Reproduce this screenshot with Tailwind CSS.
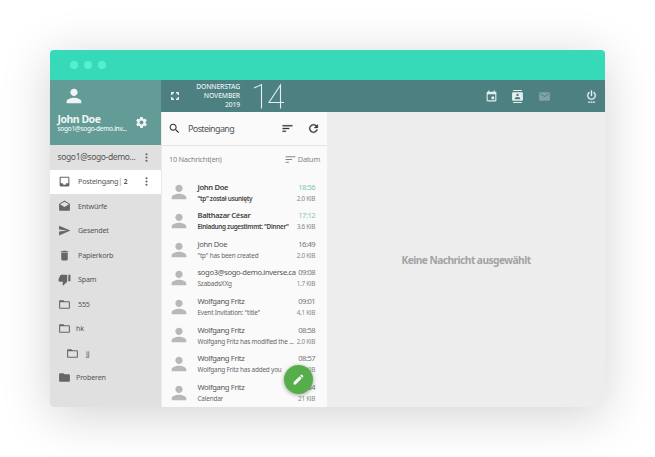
<!DOCTYPE html>
<html lang="de">
<head>
<meta charset="utf-8">
<title>SOGo Webmail</title>
<script src="https://cdn.jsdelivr.net/npm/@tailwindcss/browser@4"></script>
</head>
<body class="h-[457px] w-[655px] overflow-hidden bg-white p-[50px] font-['Noto_Sans','Open_Sans',sans-serif] text-[#555]">
<svg class="hidden">
  <symbol id="person" viewBox="0 0 24 24"><path d="M12 12c2.21 0 4-1.79 4-4s-1.79-4-4-4-4 1.79-4 4 1.79 4 4 4zm0 2c-2.67 0-8 1.34-8 4v2h16v-2c0-2.66-5.33-4-8-4z"/></symbol>
  <symbol id="dots" viewBox="0 0 24 24"><path d="M12 8a2 2 0 1 0 0-4 2 2 0 0 0 0 4zm0 2a2 2 0 1 0 0 4 2 2 0 0 0 0-4zm0 6a2 2 0 1 0 0 4 2 2 0 0 0 0-4z"/></symbol>
  <symbol id="gear" viewBox="0 0 24 24"><path d="M19.43 12.98c.04-.32.07-.64.07-.98s-.03-.66-.07-.98l2.11-1.65c.19-.15.24-.42.12-.64l-2-3.46c-.12-.22-.39-.3-.61-.22l-2.49 1c-.52-.4-1.08-.73-1.69-.98l-.38-2.65C14.46 2.18 14.25 2 14 2h-4c-.25 0-.46.18-.49.42l-.38 2.65c-.61.25-1.17.59-1.69.98l-2.49-1c-.23-.09-.49 0-.61.22l-2 3.46c-.13.22-.07.49.12.64l2.11 1.65c-.04.32-.07.65-.07.98s.03.66.07.98l-2.11 1.65c-.19.15-.24.42-.12.64l2 3.46c.12.22.39.3.61.22l2.49-1c.52.4 1.08.73 1.69.98l.38 2.65c.03.24.24.42.49.42h4c.25 0 .46-.18.49-.42l.38-2.65c.61-.25 1.17-.59 1.69-.98l2.49 1c.23.09.49 0 .61-.22l2-3.46c.12-.22.07-.49-.12-.64l-2.11-1.65zM12 15.500c-1.930 0-3.500-1.570-3.500-3.500s1.570-3.500 3.500-3.500 3.500 1.570 3.500 3.500-1.570 3.500-3.500 3.500z"/></symbol>
  <symbol id="inbox" viewBox="0 0 24 24"><path d="M19 3H5c-1.100 0-2 .9-2 2v14c0 1.100.9 2 2 2h14c1.100 0 2-.9 2-2V5c0-1.100-.9-2-2-2zm0 12h-4c0 1.660-1.350 3-3 3s-3-1.340-3-3H5V5h14v10z"/></symbol>
  <symbol id="draft" viewBox="0 0 24 24"><path d="M21.990 8c0-.72-.37-1.350-.94-1.700L12 1 2.950 6.300C2.380 6.650 2 7.280 2 8v10c0 1.100.9 2 2 2h16c1.100 0 2-.9 2-2l-.01-10zM12 13L3.740 7.840 12 3l8.260 4.840L12 13z"/></symbol>
  <symbol id="send" viewBox="0 0 24 24"><path d="M2.010 21L23 12 2.010 3 2 10l15 2-15 2z"/></symbol>
  <symbol id="trash" viewBox="0 0 24 24"><path d="M6 19c0 1.100.9 2 2 2h8c1.100 0 2-.9 2-2V7H6v12zM19 4h-3.500l-1-1h-5l-1 1H5v2h14V4z"/></symbol>
  <symbol id="spam" viewBox="0 0 24 24"><path d="M15 3H6c-.83 0-1.540.5-1.840 1.220l-3.020 7.050c-.09.23-.14.47-.14.73v2c0 1.100.9 2 2 2h6.310l-.95 4.570-.03.32c0 .41.17.79.44 1.060L9.830 23l6.590-6.590c.36-.36.58-.86.58-1.410V5c0-1.100-.9-2-2-2zm4 0v12h4V3h-4z"/></symbol>
  <symbol id="folder-open" viewBox="0 0 24 24"><path d="M20 6h-8l-2-2H4c-1.100 0-2 .9-2 2v12c0 1.100.9 2 2 2h16c1.100 0 2-.9 2-2V8c0-1.100-.9-2-2-2zm0 12H4V8h16v10z"/></symbol>
  <symbol id="folder" viewBox="0 0 24 24"><path d="M10 4H4c-1.100 0-2 .9-2 2v12c0 1.100.9 2 2 2h16c1.100 0 2-.9 2-2V8c0-1.100-.9-2-2-2h-8l-2-2z"/></symbol>
  <symbol id="full" viewBox="0 0 24 24"><path d="M7 14H4v6h6v-3H7v-3zm-3-4h3V7h3V4H4v6zm13 7h-3v3h6v-6h-3v3zM14 4v3h3v3h3V4h-6z"/></symbol>
  <symbol id="search" viewBox="0 0 24 24"><path d="M15.500 14h-.79l-.28-.27C15.410 12.590 16 11.110 16 9.500 16 5.910 13.090 3 9.500 3S3 5.910 3 9.500 5.910 16 9.500 16c1.610 0 3.090-.59 4.230-1.570l.27.28v.79l5 4.990L20.490 19l-4.990-5zm-6 0C7.010 14 5 11.990 5 9.500S7.010 5 9.500 5 14 7.010 14 9.500 11.990 14 9.500 14z"/></symbol>
  <symbol id="sort" viewBox="0 0 24 24"><path d="M3 18h6v-2H3v2zM3 6v2h18V6H3zm0 7h12v-2H3v2z"/></symbol>
  <symbol id="refresh" viewBox="0 0 24 24"><path d="M17.650 6.350C16.200 4.900 14.210 4 12 4c-4.420 0-7.990 3.580-7.990 8s3.570 8 7.990 8c3.730 0 6.840-2.550 7.730-6h-2.080c-.82 2.330-3.040 4-5.650 4-3.310 0-6-2.690-6-6s2.690-6 6-6c1.660 0 3.140.69 4.220 1.780L13 11h7V4l-2.350 2.350z"/></symbol>
  <symbol id="event" viewBox="0 0 24 24"><path d="M17 12h-5v5h5v-5zM16 1v2H8V1H6v2H5c-1.110 0-1.990.9-1.990 2L3 19c0 1.100.89 2 2 2h14c1.100 0 2-.9 2-2V5c0-1.100-.9-2-2-2h-1V1h-2zm3 18H5V8h14v11z"/></symbol>
  <symbol id="contacts" viewBox="0 0 24 24"><path d="M20 0H4v2h16V0zM4 24h16v-2H4v2zM20 4H4c-1.100 0-2 .9-2 2v12c0 1.100.9 2 2 2h16c1.100 0 2-.9 2-2V6c0-1.100-.9-2-2-2zm-8 2.750c1.240 0 2.250 1.010 2.250 2.250s-1.010 2.250-2.250 2.250S9.750 10.240 9.750 9 10.760 6.750 12 6.750zM17 17H7v-1.500c0-1.670 3.330-2.500 5-2.500s5 .83 5 2.500V17z"/></symbol>
  <symbol id="mail" viewBox="0 0 24 24"><path d="M20 4H4c-1.100 0-2 .9-2 2v12c0 1.100.9 2 2 2h16c1.100 0 2-.9 2-2V6c0-1.100-.9-2-2-2zm0 4l-8 5-8-5V6l8 5 8-5v2z"/></symbol>
  <symbol id="power" viewBox="0 0 24 24"><path d="M13 1h-2v10h2V1zm3.560 2.440l-1.450 1.450A5.969 5.969 0 0 1 18 10c0 3.310-2.690 6-6 6s-6-2.690-6-6c0-2.170 1.160-4.060 2.880-5.120L7.440 3.440A7.961 7.961 0 0 0 4 10c0 4.420 3.580 8 8 8s8-3.580 8-8c0-2.720-1.360-5.120-3.440-6.560zM6 21.500h3v2H6zm4.500 0h3v2h-3zm4.500 0h3v2h-3z"/></symbol>
  <symbol id="pencil" viewBox="0 0 24 24"><path d="M3 17.250V21h3.750L17.810 9.940l-3.750-3.750L3 17.250zM20.710 7.040c.39-.39.39-1.020 0-1.410l-2.340-2.340c-.39-.39-1.020-.39-1.410 0l-1.830 1.830 3.750 3.750 1.830-1.830z"/></symbol>
</svg>

<div class="flex h-[357px] w-[555px] flex-col overflow-hidden rounded-[4px] shadow-[0_8px_50px_rgba(0,0,0,0.18)]">
  <div class="flex h-[30px] shrink-0 items-center gap-[6px] bg-[#36dab9] pl-5">
    <i class="size-2 rounded-full bg-[#55f0d0]"></i><i class="size-2 rounded-full bg-[#55f0d0]"></i><i class="size-2 rounded-full bg-[#55f0d0]"></i>
  </div>
  <div class="flex min-h-0 flex-1">
    <aside class="flex w-[111px] shrink-0 flex-col bg-[#e0e0e0]">
      <div class="flex h-[65px] shrink-0 flex-col bg-[#639b96] text-[#eef5f4]">
        <svg class="mt-[5px] ml-[13px] size-[22px] shrink-0 fill-current"><use href="#person"/></svg>
        <div class="mt-[4px] flex items-center justify-between pr-[13px] pl-[7.500px]">
          <div class="whitespace-nowrap">
            <div class="h-[13px] text-[10.500px] leading-[17px] font-bold tracking-[-0.500px]">John Doe</div>
            <div class="h-[9px] text-[6.600px] leading-[9px] font-medium tracking-[-0.360px]">sogo1@sogo-demo.inv...</div>
          </div>
          <svg class="size-[13px] fill-current"><use href="#gear"/></svg>
        </div>
      </div>
      <div class="flex h-[24.500px] shrink-0 items-center justify-between pr-[8px] pl-[7.500px] text-[8.500px] whitespace-nowrap">
        <span class="tracking-[-0.360px]">sogo1@sogo-demo...</span><svg class="size-[13px] shrink-0 fill-[#666]"><use href="#dots"/></svg>
      </div>
      <nav id="folders" class="text-[7.200px] tracking-[-0.190px] whitespace-nowrap"></nav>
    </aside>
    <div class="flex min-w-0 flex-1 flex-col">
      <header class="flex h-[32px] shrink-0 items-center bg-[#4d8080] text-[#e6efef]">
        <svg class="ml-[8px] size-[12px] fill-current"><use href="#full"/></svg>
        <div class="w-[59px] pb-[1px] text-right text-[6.800px] leading-[9px] font-medium tracking-[-0.140px]">DONNERSTAG<br>NOVEMBER<br>2019</div>
        <svg class="ml-[12.500px] h-[28px] w-[33px] fill-none stroke-current stroke-[1.1]" viewBox="0 0 33 28" aria-label="14"><path d="M1 6 8.500 2.500V26.500M27.500 26.500V3L16 20.500H31"/></svg>
        <div class="ml-auto flex items-center pr-[7.500px]">
          <svg class="mr-[13.500px] size-[13px] fill-current"><use href="#event"/></svg>
          <svg class="mr-[13.500px] size-[13px] fill-current"><use href="#contacts"/></svg>
          <svg class="mr-[34px] size-[13px] fill-[#7fa4a3]"><use href="#mail"/></svg>
          <svg class="mt-[1px] size-[13px] fill-current stroke-current stroke-[0.6]"><use href="#power"/></svg>
        </div>
      </header>
      <div class="flex min-h-0 flex-1">
        <section class="relative w-[166px] shrink-0 overflow-hidden border-l border-[#e9e9e9] bg-[#fafafa]">
          <div class="flex h-[34px] items-center border-b border-[#e4e4e4] pr-[7px] pl-[6px]">
            <svg class="size-[13px] fill-[#333]"><use href="#search"/></svg>
            <span class="ml-[7px] text-[9px] tracking-[-0.630px]">Posteingang</span>
            <svg class="ml-auto size-[13px] fill-[#333] stroke-[#333] stroke-[0.5]"><use href="#sort"/></svg>
            <svg class="ml-[13.500px] size-[13px] fill-[#333] stroke-[#333] stroke-[0.5]"><use href="#refresh"/></svg>
          </div>
          <div class="flex h-[27px] items-center pr-[7px] pl-[7px] text-[7.400px] text-[#858585]">
            <span class="tracking-[-0.290px]">10 Nachricht(en)</span>
            <svg class="ml-auto size-[13px] fill-[#858585]"><use href="#sort"/></svg><span class="ml-[1px] tracking-[-0.300px]">Datum</span>
          </div>
          <div id="mails" class="pt-[5px]"></div>
          <button class="absolute top-[253px] left-[122px] flex size-[29px] items-center justify-center rounded-full bg-[#56ae4b] shadow-[0_1px_4px_rgba(0,0,0,0.35)]" aria-label="Neue Nachricht"><svg class="size-[13px] fill-white"><use href="#pencil"/></svg></button>
        </section>
        <main class="flex flex-1 items-center justify-center bg-[#ededed] pt-[3px] text-[10.200px] font-bold tracking-[-0.540px] text-[#a3a3a3]">Keine Nachricht ausgewählt</main>
      </div>
    </div>
  </div>
</div>
<script>
const dots = '<svg class="ml-auto size-[13px] fill-[#666]"><use href="#dots"/></svg>';
const folders = [
  ['inbox', 'Posteingang<span class="font-light">|</span> <b class="text-[6.500px]">2</b>', 'bg-white pl-[7.500px]', 'ml-[7.500px]'],
  ['draft', 'Entwürfe', 'pl-[7.500px]', 'ml-[7.500px]'],
  ['send', 'Gesendet', 'pl-[7.500px]', 'ml-[7.500px]'],
  ['trash', 'Papierkorb', 'pl-[7.500px]', 'ml-[7.500px]'],
  ['spam', 'Spam', 'pl-[7.500px]', 'ml-[7.500px]'],
  ['folder-open', '555', 'pl-[7.500px]', 'ml-[7.500px]'],
  ['folder-open', 'hk', 'pl-[7.500px]', 'ml-[5.500px]'],
  ['folder-open', 'jj', 'pl-[15.500px]', 'ml-[7.500px]'],
  ['folder', 'Proberen', 'pl-[7.500px]', 'ml-[5.500px]'],
];
document.getElementById('folders').innerHTML = folders.map(([icon, label, row, gap], i) =>
  `<div class="flex h-[24.500px] items-center pr-2 ${row}"><svg class="size-[13px] fill-[#666]"><use href="#${icon}"/></svg><span class="${gap}">${label}</span>${i ? '' : dots}</div>`).join('');
const mails = [
  ['John Doe', '18:56', '"tp" został usunięty', '2.0 KiB', true],
  ['Balthazar César', '17:12', 'Einladung zugestimmt: "Dinner"', '3.6 KiB', true],
  ['John Doe', '16:49', '"tp" has been created', '2.0 KiB'],
  ['sogo3@sogo-demo.inverse.ca', '09:08', 'SzabadsXXg', '1.7 KiB'],
  ['Wolfgang Fritz', '09:01', 'Event Invitation: "title"', '4.1 KiB'],
  ['Wolfgang Fritz', '08:58', 'Wolfgang Fritz has modified the ...', '2.0 KiB'],
  ['Wolfgang Fritz', '08:57', 'Wolfgang Fritz has added you', '2.2 KiB'],
  ['Wolfgang Fritz', '08:54', 'Calendar', '21 KiB'],
];
document.getElementById('mails').innerHTML = mails.map(([from, time, subject, size, unread]) =>
  `<div class="flex h-[28.640px] items-center pr-[12px] pl-[6px] whitespace-nowrap">
    <svg class="size-[22px] shrink-0 fill-[#b8b8b8]"><use href="#person"/></svg>
    <div class="ml-[7.500px] min-w-0 flex-1 pt-[0.500px]">
      <div class="flex justify-between text-[7.600px] leading-[11px]"><span class="${unread ? 'font-semibold tracking-[-0.350px] text-[#444]' : 'tracking-[-0.340px]'}">${from}</span><span class="tracking-[-0.550px] ${unread ? 'text-[#83c5b9]' : 'text-[#777]'}">${time}</span></div>
      <div class="flex justify-between text-[6.400px] leading-[11px]"><span class="${unread ? 'font-semibold tracking-[-0.320px] text-[#444]' : 'tracking-[-0.180px] text-[#666]'}">${subject}</span><span class="tracking-[-0.300px] text-[#888]">${size}</span></div>
    </div>
  </div>`).join('');
</script>
</body>
</html>
